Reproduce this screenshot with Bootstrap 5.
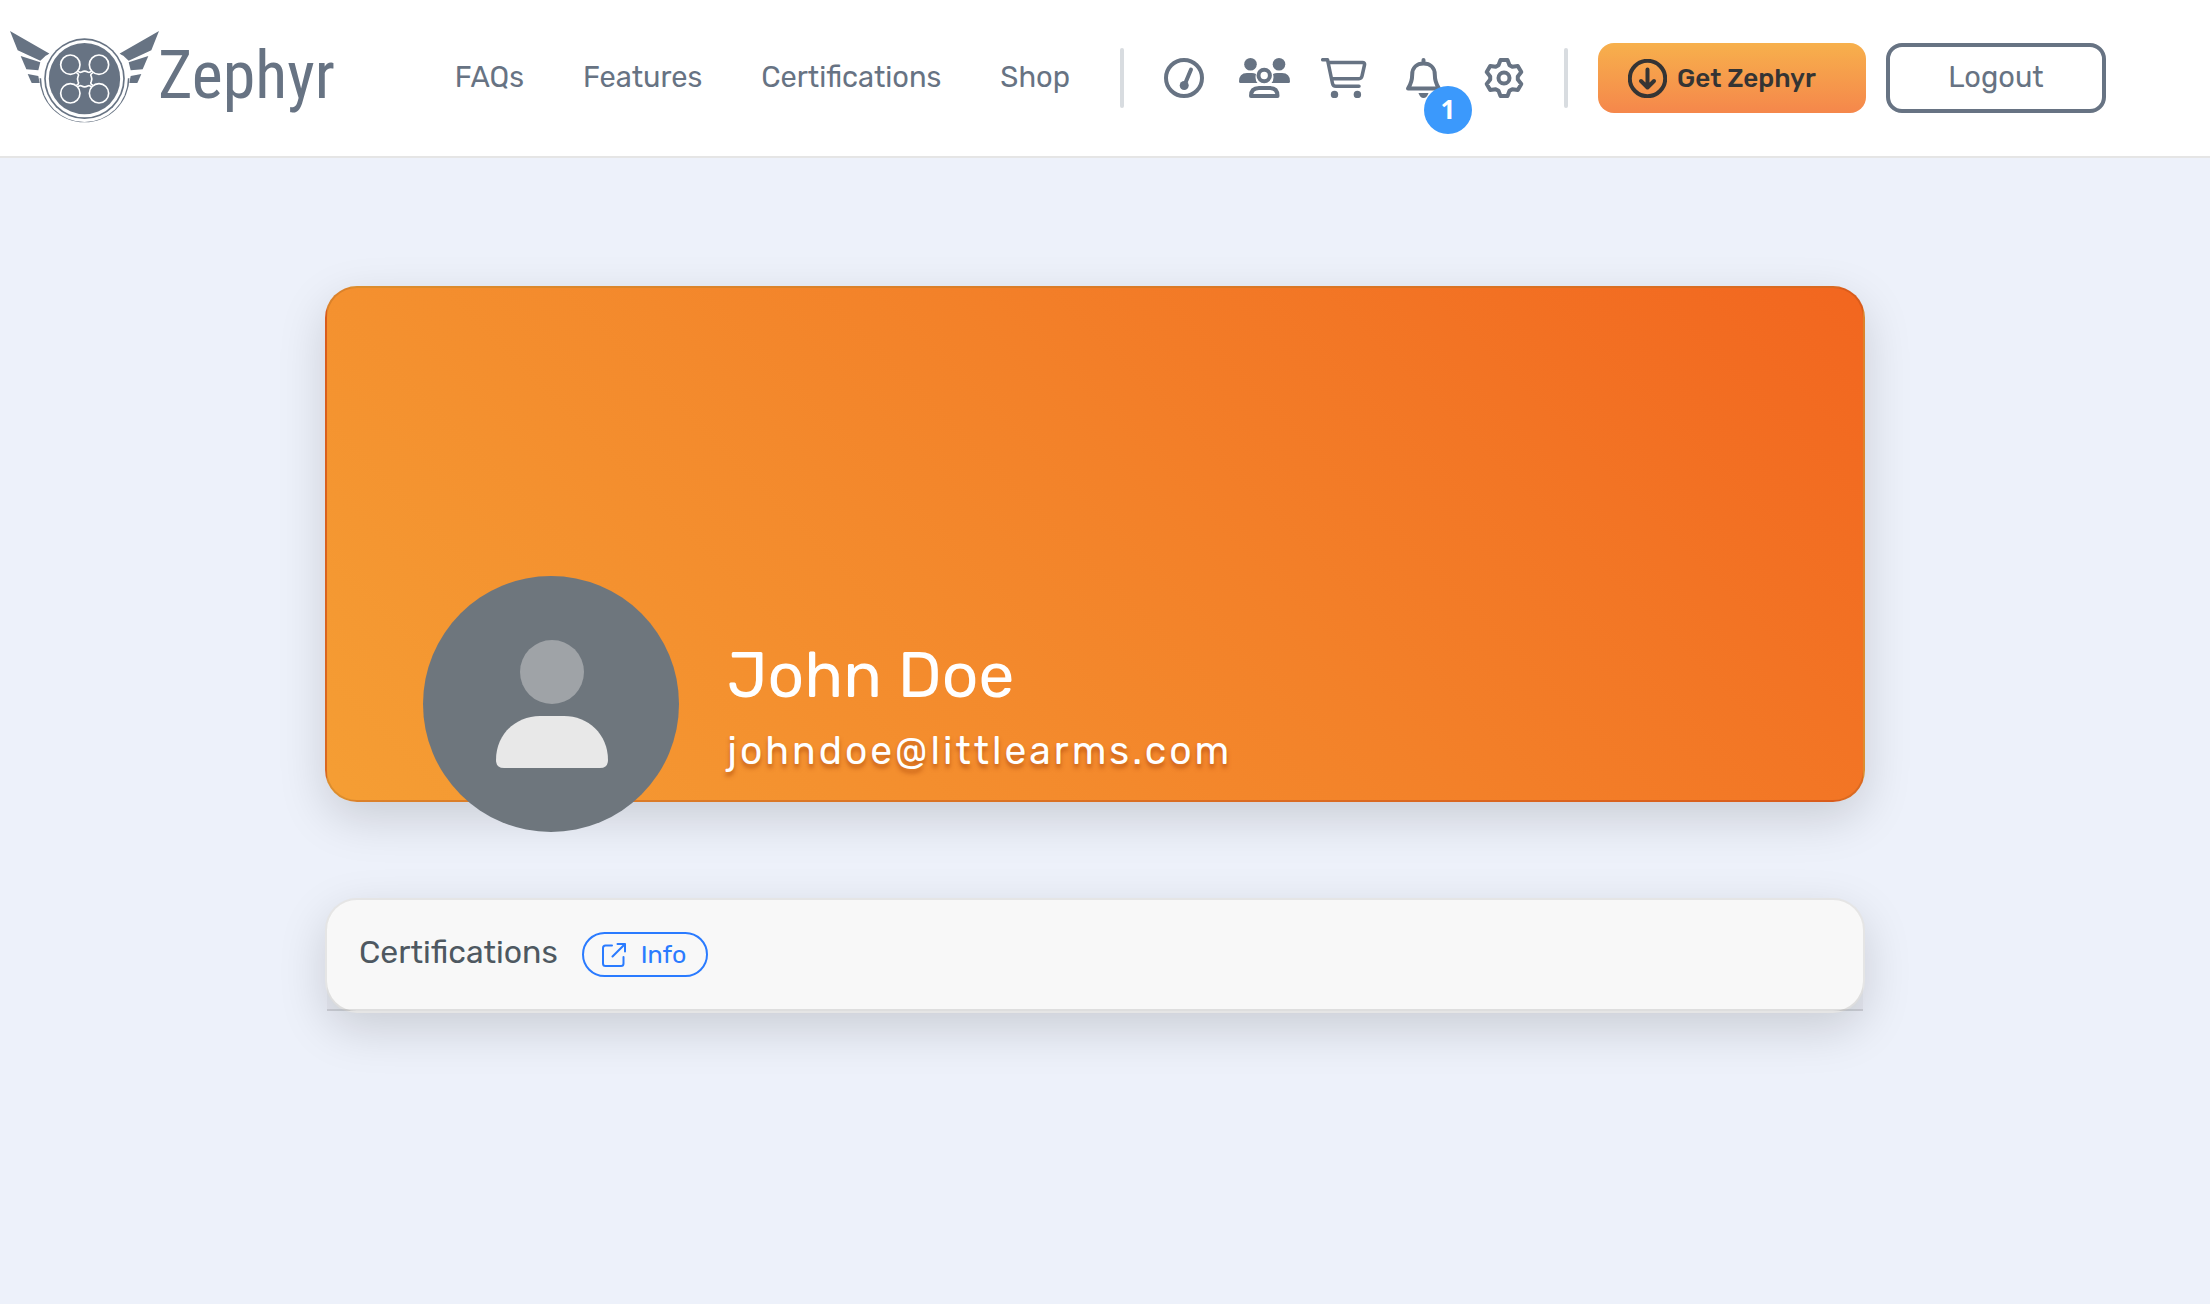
<!DOCTYPE html>
<html lang="en">
<head>
<meta charset="utf-8">
<meta name="viewport" content="width=device-width, initial-scale=1">
<title>Zephyr – Profile</title>
<link rel="stylesheet" href="https://cdn.jsdelivr.net/npm/bootstrap@5.3.0/dist/css/bootstrap.min.css">
<style>
  :root { --slate: #677383; }
  body { background: #edf1fa; font-family: Rubik, Roboto, sans-serif; color: #4e5861; min-height: 100vh; }
  .site-bar { background: #fff; border-bottom: 2px solid #e5e5e5; min-height: 158px; padding: 0 104px 4px 10px; color: var(--slate); }
  .site-bar a { color: inherit; text-decoration: none; }
  .brand-name { font-family: "Roboto Condensed", "Liberation Sans Narrow", Roboto, sans-serif; font-size: 66px; line-height: 88px; margin-left: -2px; }
  .site-menu { padding-top: 4px; }
  .main-links { gap: 59px; font-size: 29px; line-height: 38px; margin-right: 50px; padding-bottom: 2px; }
  .rule { width: 4px; height: 60px; border-radius: 2px; background: #d8dce0; flex: none; }
  .tools { gap: 28px; margin: 0 34px; }
  .tools a { width: 52px; height: 40px; }
  .tools svg, .btn svg { display: block; fill: none; stroke: currentColor; stroke-width: 4; stroke-linecap: round; stroke-linejoin: round; flex: none; }
  .tools .solid { fill: currentColor; stroke: none; }
  .count { width: 48px; height: 48px; left: 26px; top: 28px; background: #3b99fc; color: #fff; font: 700 26px/46px "Open Sans", sans-serif; text-align: center; }
  .btn-get { width: 268px; height: 70px; border: 0; border-radius: 16px; padding: 0 30px; gap: 10px; margin: 0 20px 0 30px; background: linear-gradient(#f7b04c, #f5874b); color: #343434; font-size: 26px; font-weight: 500; }
  .btn-get:hover { color: #343434; }
  .btn-out { width: 220px; height: 70px; border: 4px solid var(--slate); border-radius: 16px; color: var(--slate); font-size: 29px; line-height: 40px; padding: 0 0 2px; }
  .page { width: 1540px; max-width: 100%; margin: 128px 345px 0 auto; padding-bottom: 128px; }
  .panel { border: 2px solid rgba(0,0,0,.1); border-radius: 32px; box-shadow: 0 16px 48px rgba(0,0,0,.15); }
  .hero { height: 516px; background: linear-gradient(45deg, #f59e34, #f38129 55%, #f2661f); }
  .hero-row { margin-top: 288px; padding-left: 96px; gap: 48px; }
  .avatar { width: 256px; height: 256px; flex: none; }
  .who { padding-top: 56px; color: #fff; }
  .who-name { font-size: 64px; line-height: 86px; font-weight: 400; margin: 0; }
  .who-mail { font-size: 39px; line-height: 66px; letter-spacing: 3px; text-shadow: 0 4px 4px rgba(150,50,0,.5); margin: 0; }
  .certs { margin-top: 96px; }
  .certs .card-header { height: 111px; padding: 0 32px; gap: 24px; border-bottom: 2px solid rgba(0,0,0,.1); border-radius: 30px 30px 0 0; }
  .certs h2 { font-size: 32px; line-height: 40px; font-weight: 400; margin: 0 0 6px; }
  .btn-ext { height: 45px; border: 2px solid #2a7bff; color: #2a7bff; font-size: 25px; line-height: 40px; padding: 0 20px 0 18px; gap: 15px; }
</style>
<script src="https://cdn.jsdelivr.net/npm/bootstrap@5.3.0/dist/js/bootstrap.bundle.min.js"></script>
</head>
<body>
<header class="site-bar d-flex align-items-center">
  <a href="#" class="brand d-flex align-items-center me-auto" aria-label="Zephyr home">
    <svg width="150" height="93" viewBox="15 15 450 279" fill="#677383" aria-hidden="true">
      <defs>
        <clipPath id="lower"><rect x="80" y="160" width="320" height="140"/></clipPath>
        <g id="wing">
          <path d="M15 18L38 76L106 107L122 92L134 86Z"/>
          <path d="M47 93L106 112L100 136L64 133Z"/>
          <path d="M68 147L100 153L104 174L80 174Z"/>
        </g>
      </defs>
      <use href="#wing"/>
      <use href="#wing" transform="matrix(-1 0 0 1 477 0)"/>
      <circle cx="238.500" cy="157" r="135" clip-path="url(#lower)"/>
      <circle cx="238.500" cy="161" r="130" fill="#fff"/>
      <circle cx="238.500" cy="161" r="121"/>
      <circle cx="238.500" cy="161" r="116" fill="#fff"/>
      <circle cx="238.500" cy="161" r="107"/>
      <g fill="none" stroke="#fff" stroke-width="5">
        <circle cx="196" cy="119" r="29"/><circle cx="282" cy="119" r="29"/>
        <circle cx="196" cy="205" r="29"/><circle cx="282" cy="205" r="29"/>
        <path d="M219 138Q224 144 230 141Q239 136 248 141Q254 144 259 138M219 186Q224 180 230 183Q239 188 248 183Q254 180 259 186M214 143Q224 147 219 155Q216 162 219 169Q224 177 214 181M264 143Q254 147 259 155Q262 162 259 169Q254 177 264 181"/>
      </g>
    </svg>
    <span class="brand-name">Zephyr</span>
  </a>
  <div class="site-menu d-flex align-items-center">
    <nav class="main-links d-flex" aria-label="Main">
      <a href="#">FAQs</a><a href="#">Features</a><a href="#">Certifications</a><a href="#">Shop</a>
    </nav>
    <span class="rule"></span>
    <div class="tools d-flex">
      <a href="#" class="d-flex justify-content-center" aria-label="Dashboard">
        <svg width="40" height="40" viewBox="0 0 40 40"><circle cx="20" cy="20" r="18"/><path d="M27 11.500L20.500 27"/><circle class="solid" cx="20.200" cy="27.500" r="4.500"/></svg>
      </a>
      <a href="#" class="d-flex justify-content-center" aria-label="Community">
        <svg width="51" height="40" viewBox="0 0 51 40"><g class="solid"><circle cx="11.500" cy="6.300" r="6.300"/><circle cx="40" cy="6.300" r="6.300"/><path d="M1.500 25Q0 25 0 23.500Q0 15 8 15H13Q15 15 17 16Q15.500 21.500 18.500 25ZM49.500 25Q51 25 51 23.500Q51 15 43 15H38Q36 15 34 16Q35.500 21.500 32.500 25Z"/></g><circle cx="25.200" cy="17.500" r="5.700"/><path d="M12 38Q12 30 20 30H31Q38.500 30 38.500 38Z"/></svg>
      </a>
      <a href="#" class="d-flex justify-content-center" aria-label="Cart">
        <svg width="46" height="40" viewBox="0 0 46 40"><path d="M1.700 1.700H6.500L11.500 25.500Q12 28.300 15 28.300H38M8 4.500H41.500Q44 4.500 43.500 7L41 18Q40.500 20.700 38 20.700H11" stroke-width="3.500"/><circle class="solid" cx="13.500" cy="36.400" r="3.700"/><circle class="solid" cx="36.400" cy="36.400" r="3.700"/></svg>
      </a>
      <a href="#" class="d-flex justify-content-center position-relative" aria-label="Notifications">
        <svg width="36" height="40" viewBox="0 0 36 40"><path d="M17.500 2V5M2 30.500C5 26 6.200 22 6.200 16.500C6.200 9.500 11 5.500 17.500 5.500C24 5.500 28.800 9.500 28.800 16.500C28.800 22 30 26 33 30.500Z"/><path class="solid" d="M12.500 35H22.500Q21 40 17.500 40Q14 40 12.500 35Z"/></svg>
        <span class="count position-absolute rounded-circle">1</span>
      </a>
      <a href="#" class="d-flex justify-content-center" aria-label="Settings">
        <svg width="40" height="40" viewBox="-20 -20 40 40"><path d="M-3.500-18H3.500L5.500-12.800L8.300-11.200L13.800-12L17.300-6L13.800-1.600V1.600L17.300 6L13.800 12L8.300 11.200L5.500 12.800L3.500 18H-3.500L-5.500 12.800L-8.300 11.200L-13.800 12L-17.300 6L-13.800 1.600V-1.600L-17.300-6L-13.800-12L-8.300-11.200L-5.500-12.800Z"/><circle r="5.500"/></svg>
      </a>
    </div>
    <span class="rule"></span>
    <button type="button" class="btn btn-get d-flex align-items-center">
      <svg width="39" height="39" viewBox="0 0 39 39" aria-hidden="true"><circle cx="19.500" cy="19.500" r="17.700"/><path d="M19.500 10.500V28M13 22L19.500 28.500L26 22"/></svg>
      Get Zephyr
    </button>
    <button type="button" class="btn btn-out">Logout</button>
  </div>
</header>
<main class="page">
  <section class="card panel hero">
    <div class="hero-row d-flex">
      <svg class="avatar" viewBox="0 0 256 256" role="img" aria-label="Avatar"><circle cx="128" cy="128" r="128" fill="#6e767d"/><circle cx="129" cy="96" r="32" fill="#9fa3a7"/><path d="M73 184c0-26 20-44 44-44h24c24 0 44 18 44 44q0 8-8 8H81q-8 0-8-8z" fill="#e8e8e8"/></svg>
      <div class="who"><h1 class="who-name">John Doe</h1><p class="who-mail">johndoe@littlearms.com</p></div>
    </div>
  </section>
  <section class="card panel certs">
    <div class="card-header d-flex align-items-center">
      <h2>Certifications</h2>
      <button type="button" class="btn btn-ext rounded-pill d-flex align-items-center">
        <svg width="24" height="24" viewBox="0 0 24 24" aria-hidden="true"><path d="M10 2.500H3.500Q1 2.500 1 5V20.500Q1 23 3.500 23H19Q21.500 23 21.500 20.500V14M15.500 1H23V8.500M23 1L10.500 13.500" stroke-width="2"/></svg>
        Info
      </button>
    </div>
  </section>
</main>
</body>
</html>
